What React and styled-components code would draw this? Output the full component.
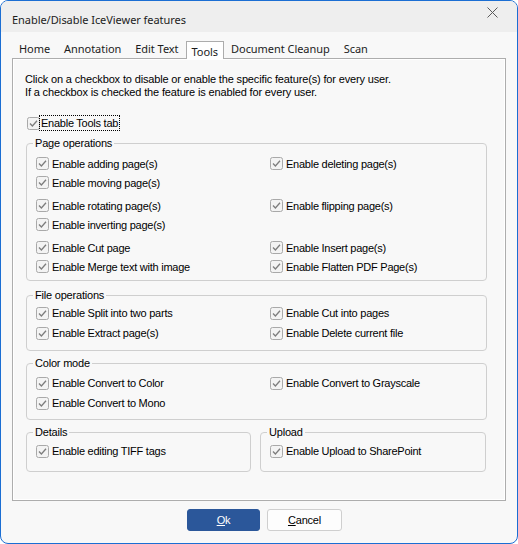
import React from 'react';
import styled, { createGlobalStyle } from 'styled-components';

const GlobalStyle = createGlobalStyle`
  html, body {
    margin: 0;
    padding: 0;
    background: #ffffff;
  }
  body {
    font-family: "Liberation Sans", Arial, sans-serif;
  }
  * {
    box-sizing: border-box;
  }
`;

const tabs = ['Home', 'Annotation', 'Edit Text', 'Tools', 'Document Cleanup', 'Scan'];

function Checkbox() {
  return (
    <CheckIcon width="13" height="13" viewBox="0 0 13 13">
      <rect x="0.5" y="0.5" width="12" height="12" rx="2" fill="#f3f3f3" stroke="#a9a9a9" />
      <polyline points="3,6.5 5.4,9 10,3.8" fill="none" stroke="#7d7d7d" strokeWidth="1.3" />
    </CheckIcon>
  );
}

function Option({ label, focused }) {
  return (
    <Item>
      <Checkbox />
      <Label focused={focused}>{label}</Label>
    </Item>
  );
}

function Group({ title, pad, gapBelow, width, children }) {
  return (
    <Fieldset gapBelow={gapBelow} width={width}>
      <Legend>{title}</Legend>
      <GroupBody pad={pad}>{children}</GroupBody>
    </Fieldset>
  );
}

function App() {
  return (
    <>
      <GlobalStyle />
      <Window>
        <TitleBar>
          <span>Enable/Disable IceViewer features</span>
          <Close width="11" height="11" viewBox="0 0 11 11">
            <path d="M0.5 0.5 L10.5 10.5 M10.5 0.5 L0.5 10.5" stroke="#5a5a5a" strokeWidth="1" />
          </Close>
        </TitleBar>

        <TabStrip>
          {tabs.map((t) => (
            <Tab key={t} active={t === 'Tools'}>
              {t}
            </Tab>
          ))}
        </TabStrip>

        <Panel>
          <Intro>
            Click on a checkbox to disable or enable the specific feature(s) for every user.
            <br />
            If a checkbox is checked the feature is enabled for every user.
          </Intro>

          <ToolsRow>
            <Option label="Enable Tools tab" focused />
          </ToolsRow>

          <Group title="Page operations" pad="4px 0 4px 9px" gapBelow="7px">
            <SubGrid>
              <Option label="Enable adding page(s)" />
              <Option label="Enable deleting page(s)" />
              <Option label="Enable moving page(s)" />
            </SubGrid>
            <SubGrid spaced>
              <Option label="Enable rotating page(s)" />
              <Option label="Enable flipping page(s)" />
              <Option label="Enable inverting page(s)" />
            </SubGrid>
            <SubGrid spaced>
              <Option label="Enable Cut page" />
              <Option label="Enable Insert page(s)" />
              <Option label="Enable Merge text with image" />
              <Option label="Enable Flatten PDF Page(s)" />
            </SubGrid>
          </Group>

          <Group title="File operations" pad="1px 0 7px 9px">
            <SubGrid tall>
              <Option label="Enable Split into two parts" />
              <Option label="Enable Cut into pages" />
              <Option label="Enable Extract page(s)" />
              <Option label="Enable Delete current file" />
            </SubGrid>
          </Group>

          <Group title="Color mode" pad="3px 0 6px 9px">
            <SubGrid tall>
              <Option label="Enable Convert to Color" />
              <Option label="Enable Convert to Grayscale" />
              <Option label="Enable Convert to Mono" />
            </SubGrid>
          </Group>

          <BottomGroups>
            <Group title="Details" pad="2px 0 10px 9px" gapBelow="0" width="225px">
              <SubGrid tall>
                <Option label="Enable editing TIFF tags" />
              </SubGrid>
            </Group>
            <Group title="Upload" pad="2px 0 10px 9px" gapBelow="0" width="226px">
              <SubGrid tall>
                <Option label="Enable Upload to SharePoint" />
              </SubGrid>
            </Group>
          </BottomGroups>
        </Panel>

        <ButtonRow>
          <Button primary>
            <u>O</u>k
          </Button>
          <Button>
            <u>C</u>ancel
          </Button>
        </ButtonRow>
      </Window>
    </>
  );
}

const Window = styled.div`
  width: 518px;
  height: 544px;
  border: 1px solid #1b6ed3;
  border-radius: 8px;
  overflow: hidden;
  background: #f8f8f8;
  display: flex;
  flex-direction: column;
`;

const TitleBar = styled.div`
  height: 31px;
  flex: none;
  background: #eeeeee;
  display: flex;
  justify-content: space-between;
  align-items: flex-start;
  padding: 11px 19px 0 11px;
  font-family: "Noto Sans", "Open Sans", sans-serif;
  font-size: 11px;
  line-height: 15px;
  color: #1c1c1c;
  letter-spacing: -0.05px;
`;

const Close = styled.svg`
  margin-top: -5px;
`;

const TabStrip = styled.div`
  display: flex;
  align-items: flex-end;
  height: 18px;
  margin-top: 8px;
  padding-left: 11px;
  position: relative;
  z-index: 1;
  font-family: "Noto Sans", "Open Sans", sans-serif;
  font-size: 11px;
  letter-spacing: -0.05px;
  color: #1c1c1c;
`;

const Tab = styled.div`
  height: ${(p) => (p.active ? '18px' : '17px')};
  line-height: ${(p) => (p.active ? '19px' : '16px')};
  padding: ${(p) => (p.active ? '0 5px' : '0 7px')};
  background: ${(p) => (p.active ? '#ffffff' : 'transparent')};
  border: ${(p) => (p.active ? '1px solid #acacac' : 'none')};
  border-bottom: none;
  margin-bottom: ${(p) => (p.active ? '-1px' : '0')};
  white-space: nowrap;
`;

const Panel = styled.div`
  width: 494px;
  height: 443px;
  margin-left: 11px;
  border: 1px solid #adadad;
  box-shadow: inset 0 0 0 1px #ffffff;
  background: #f8f8f8;
  padding: 14px 12px 0 12px;
  display: flex;
  flex-direction: column;
`;

const Intro = styled.div`
  font-size: 11px;
  line-height: 13px;
  color: #000;
  letter-spacing: -0.15px;
`;

const ToolsRow = styled.div`
  margin: 17px 0 6px 2px;
`;

const Item = styled.div`
  display: flex;
  align-items: center;
  height: 100%;
  white-space: nowrap;
`;

const CheckIcon = styled.svg`
  flex: none;
  display: block;
`;

const Label = styled.span`
  font-size: 11px;
  line-height: 12px;
  color: #000;
  letter-spacing: -0.25px;
  margin-left: ${(p) => (p.focused ? '0' : '2px')};
  padding: 0 1px;
  outline: ${(p) => (p.focused ? '1px dotted #000' : 'none')};
  outline-offset: 0;
  ${(p) => (p.focused ? 'height: 14px; line-height: 14px;' : '')}
`;

const Fieldset = styled.fieldset`
  width: ${(p) => p.width || '461px'};
  margin: 0 0 ${(p) => p.gapBelow || '5px'} 1px;
  padding: 0;
  border: 1px solid #cfcfcf;
  border-radius: 4px;
  min-width: 0;
`;

const Legend = styled.legend`
  margin-left: 6px;
  padding: 0 2px;
  font-size: 11px;
  line-height: 14px;
  color: #000;
  letter-spacing: -0.2px;
`;

const GroupBody = styled.div`
  padding: ${(p) => p.pad};
`;

const SubGrid = styled.div`
  display: grid;
  grid-template-columns: 234px 1fr;
  grid-auto-rows: ${(p) => (p.tall ? '20px' : '19px')};
  margin-top: ${(p) => (p.spaced ? '4px' : '0')};
`;

const BottomGroups = styled.div`
  display: flex;
  gap: 9px;
  padding-left: 1px;

  & > fieldset {
    margin-left: 0;
  }
`;

const ButtonRow = styled.div`
  display: flex;
  justify-content: center;
  gap: 7px;
  margin-top: 8px;
  padding-left: 11px;
`;

const Button = styled.button`
  width: ${(p) => (p.primary ? '73px' : '75px')};
  height: 22px;
  border-radius: 3px;
  border: 1px solid ${(p) => (p.primary ? '#2b579a' : '#cfcfcf')};
  background: ${(p) => (p.primary ? '#2b579a' : '#fdfdfd')};
  color: ${(p) => (p.primary ? '#ffffff' : '#000000')};
  font-family: "Liberation Sans", Arial, sans-serif;
  font-size: 11px;
  letter-spacing: -0.2px;
  padding: 0;
  cursor: pointer;

  u {
    text-underline-offset: 1px;
  }
`;

export default App;
